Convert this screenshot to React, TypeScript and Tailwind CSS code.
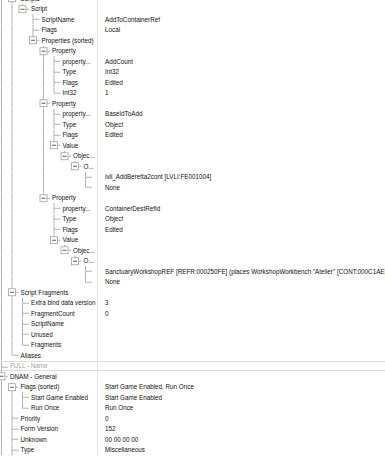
import React from 'react';

type Row = {
  level: number;
  name: string;
  value?: string;
  expanded?: boolean;
  muted?: boolean;
};

const rows: Row[] = [
  { level: 1, name: 'Scripts', expanded: true },
  { level: 2, name: 'Script', expanded: true },
  { level: 3, name: 'ScriptName', value: 'AddToContainerRef' },
  { level: 3, name: 'Flags', value: 'Local' },
  { level: 3, name: 'Properties (sorted)', expanded: true },
  { level: 4, name: 'Property', expanded: true },
  { level: 5, name: 'property...', value: 'AddCount' },
  { level: 5, name: 'Type', value: 'Int32' },
  { level: 5, name: 'Flags', value: 'Edited' },
  { level: 5, name: 'Int32', value: '1' },
  { level: 4, name: 'Property', expanded: true },
  { level: 5, name: 'property...', value: 'BaseIdToAdd' },
  { level: 5, name: 'Type', value: 'Object' },
  { level: 5, name: 'Flags', value: 'Edited' },
  { level: 5, name: 'Value', expanded: true },
  { level: 6, name: 'Objec...', expanded: true },
  { level: 7, name: 'O...', expanded: true },
  { level: 8, name: '', value: 'lvli_AddBeretta2cont [LVLI:FE001004]' },
  { level: 8, name: '', value: 'None' },
  { level: 4, name: 'Property', expanded: true },
  { level: 5, name: 'property...', value: 'ContainerDestRefId' },
  { level: 5, name: 'Type', value: 'Object' },
  { level: 5, name: 'Flags', value: 'Edited' },
  { level: 5, name: 'Value', expanded: true },
  { level: 6, name: 'Objec...', expanded: true },
  { level: 7, name: 'O...', expanded: true },
  {
    level: 8,
    name: '',
    value: 'SanctuaryWorkshopREF [REFR:000250FE] (places WorkshopWorkbench "Atelier" [CONT:000C1AEB] in',
  },
  { level: 8, name: '', value: 'None' },
  { level: 1, name: 'Script Fragments', expanded: true },
  { level: 2, name: 'Extra bind data version', value: '3' },
  { level: 2, name: 'FragmentCount', value: '0' },
  { level: 2, name: 'ScriptName' },
  { level: 2, name: 'Unused' },
  { level: 2, name: 'Fragments' },
  { level: 1, name: 'Aliases' },
  { level: 0, name: 'FULL - Name', muted: true },
  { level: 0, name: 'DNAM - General', expanded: true },
  { level: 1, name: 'Flags (sorted)', value: 'Start Game Enabled, Run Once', expanded: true },
  { level: 2, name: 'Start Game Enabled', value: 'Start Game Enabled' },
  { level: 2, name: 'Run Once', value: 'Run Once' },
  { level: 1, name: 'Priority', value: '0' },
  { level: 1, name: 'Form Version', value: '152' },
  { level: 1, name: 'Unknown', value: '00 00 00 00' },
  { level: 1, name: 'Type', value: 'Miscellaneous' },
];

const ROW_H = 10.5;
const MID = ROW_H / 2;
const lineX = (level: number) => 1.5 + level * 10.5;

// does the node at `level` (ancestor or self of row i) have a sibling further down
function continues(i: number, level: number) {
  for (let j = i + 1; j < rows.length; j++) {
    if (rows[j].level <= level) return rows[j].level === level;
  }
  // rows past the bottom edge keep the outer levels going
  return level <= 1;
}

function TreeLines({ index, row }: { index: number; row: Row }) {
  const x = lineX(row.level);
  const guides: number[] = [];
  for (let k = 0; k < row.level; k++) {
    if (continues(index, k)) guides.push(k);
  }
  const stroke = '#b3b3b3';
  return (
    <svg className="absolute inset-0" width={97} height={ROW_H}>
      {guides.map((k) => (
        <line key={k} x1={lineX(k)} y1={0} x2={lineX(k)} y2={ROW_H} stroke={stroke} strokeWidth={1} />
      ))}
      <line x1={x} y1={0} x2={x} y2={continues(index, row.level) ? ROW_H : MID} stroke={stroke} strokeWidth={1} />
      <line x1={x} y1={MID} x2={x + 6.5} y2={MID} stroke={stroke} strokeWidth={1} />
      {row.expanded && (
        <g>
          <rect x={x - 3.5} y={MID - 3.5} width={7} height={7} fill="#ffffff" stroke="#a0a0a0" strokeWidth={0.8} />
          <line x1={x - 2} y1={MID} x2={x + 2} y2={MID} stroke="#4a4a4a" strokeWidth={0.9} />
        </g>
      )}
    </svg>
  );
}

export default function App() {
  return (
    <div
      className="h-[457px] w-[385px] overflow-hidden bg-white text-[6.3px] text-[#111111]"
      style={{ fontFamily: '"Liberation Sans", Arial, sans-serif' }}
    >
      <div className="mt-[-6.75px]">
        {rows.map((row, i) => (
          <div
            key={i}
            className={
              row.muted
                ? 'flex h-[10.5px] items-center border-y border-[#dedede] bg-white'
                : 'flex h-[10.5px] items-center'
            }
          >
            <div className="relative flex h-full w-[98px] shrink-0 items-center border-r border-[#e4e4e4]">
              <TreeLines index={i} row={row} />
              <span
                className={row.muted ? 'relative whitespace-nowrap text-[#a3a3a3]' : 'relative whitespace-nowrap'}
                style={{ paddingLeft: lineX(row.level) + 8.5 }}
              >
                {row.name}
              </span>
            </div>
            <div className="min-w-0 flex-1 overflow-hidden whitespace-nowrap pl-[7px]">{row.value}</div>
          </div>
        ))}
      </div>
    </div>
  );
}
